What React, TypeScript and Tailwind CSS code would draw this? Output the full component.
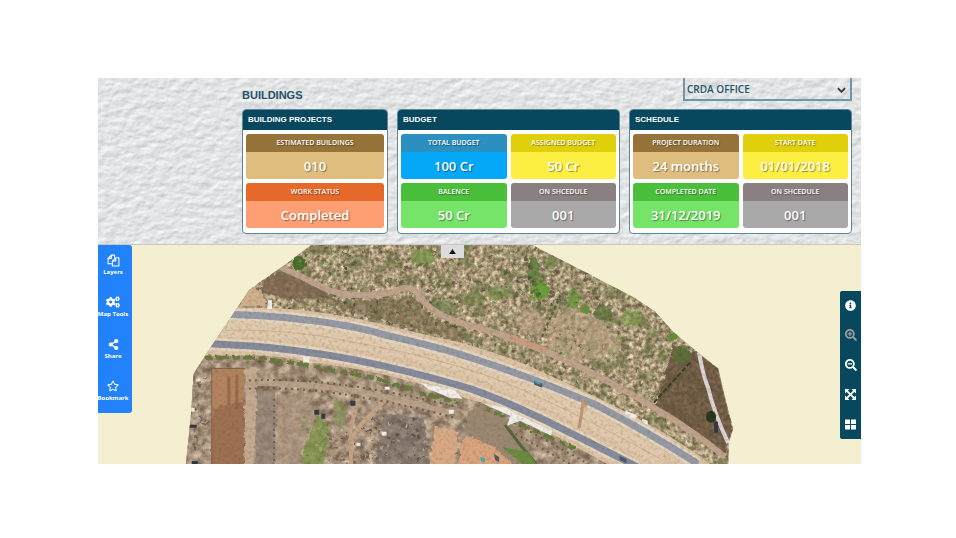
import type { ReactNode } from "react";
import { FaCogs, FaInfoCircle, FaRegStar, FaSearchMinus, FaSearchPlus, FaShareAlt } from "react-icons/fa";

type Tile = { label: string; value: string; head: string; body: string };

const projects: Tile[] = [
  { label: "ESTIMATED BUILDINGS", value: "010", head: "bg-[#967439]", body: "bg-[#dfbd7e]" },
  { label: "WORK STATUS", value: "Completed", head: "bg-[#e6692c]", body: "bg-[#fd9f72]" },
];

const budget: Tile[] = [
  { label: "TOTAL BUDGET", value: "100 Cr", head: "bg-[#2b8fbf]", body: "bg-[#05a7f8]" },
  { label: "ASSIGNED BUDGET", value: "50 Cr", head: "bg-[#e0d00b]", body: "bg-[#fdef42]" },
  { label: "BALENCE", value: "50 Cr", head: "bg-[#4abf3c]", body: "bg-[#75e468]" },
  { label: "ON SHCEDULE", value: "001", head: "bg-[#8b8081]", body: "bg-[#a9a9a9]" },
];

const schedule: Tile[] = [
  { label: "PROJECT DURATION", value: "24 months", head: "bg-[#967439]", body: "bg-[#dfbd7e]" },
  { label: "START DATE", value: "01/01/2018", head: "bg-[#e0d00b]", body: "bg-[#fdef42]" },
  { label: "COMPLETED DATE", value: "31/12/2019", head: "bg-[#4abf3c]", body: "bg-[#75e468]" },
  { label: "ON SHCEDULE", value: "001", head: "bg-[#8b8081]", body: "bg-[#a9a9a9]" },
];

function Card({ title, tiles, columns }: { title: string; tiles: Tile[]; columns: string }) {
  return (
    <section className="overflow-hidden rounded-[4px] border border-[#5d8799] bg-white">
      <h2 className="h-5 bg-[#07485f] pl-[5px] font-['Liberation_Sans',Arial,sans-serif] text-[8px] leading-[19px] font-bold text-white">
        {title}
      </h2>
      <div className={`grid gap-1 px-[3px] pt-1 pb-[5px] ${columns}`}>
        {tiles.map((tile) => (
          <div key={tile.label} className="overflow-hidden rounded-[3px] text-center text-white">
            <div className={`h-[18px] text-[7px] leading-[18px] font-semibold whitespace-nowrap text-shadow-[1px_1px_1px_rgb(0_0_0/0.4)] ${tile.head}`}>
              {tile.label}
            </div>
            <div className={`h-[27px] text-[13px] leading-[28px] font-semibold whitespace-nowrap text-shadow-[1px_1px_1px_rgb(0_0_0/0.4)] ${tile.body}`}>
              {tile.value}
            </div>
          </div>
        ))}
      </div>
    </section>
  );
}

function PaperTexture() {
  return (
    <svg className="absolute inset-0 h-full w-full" aria-hidden="true">
      <filter id="paper" x="0" y="0" width="100%" height="100%" colorInterpolationFilters="sRGB">
        <feTurbulence type="fractalNoise" baseFrequency="0.1 0.14" numOctaves="3" seed="8" result="n" />
        <feDiffuseLighting in="n" lightingColor="#fbfcfd" surfaceScale="0.5" diffuseConstant="1.1">
          <feDistantLight azimuth="60" elevation="55" />
        </feDiffuseLighting>
      </filter>
      <rect width="100%" height="100%" filter="url(#paper)" />
    </svg>
  );
}

/* Small seeded generator, so scattered shrubs land in the same place on each render. */
function random(seed: number) {
  let s = seed;
  return () => {
    s = (s * 16807) % 2147483647;
    return s / 2147483647;
  };
}

function scatter(seed: number, count: number, x: number, y: number, w: number, h: number, size: number, colors: string[]) {
  const r = random(seed);
  return Array.from({ length: count }, (_, i) => (
    <ellipse
      key={i}
      cx={x + r() * w}
      cy={y + r() * h}
      rx={0.6 + r() * size}
      ry={0.6 + r() * size}
      fill={colors[Math.floor(r() * colors.length)]}
      opacity={0.45 + r() * 0.45}
    />
  ));
}

const greens = ["#6f8a45", "#577238", "#7f9a58", "#4c5f38"];
const darks = ["#5e5140", "#4b4638", "#6d5a47", "#564b45"];

const roadEdge =
  "M200 303 L235 307 L280 308 Q330 311 387 325 T460 342 Q500 353 527 365 Q580 388 627 412 Q680 440 713 466 L612 466 Q560 437 520 417 Q490 403 467 398 Q430 385 380 373 Q340 365 313 362 Q280 355 257 355 L195 355 Z";
const dirtPath = "M276 265 Q300 275 323 287 Q340 296 365 295 Q387 295 400 289 Q412 284 420 296 Q433 316 470 325 Q527 340 593 373 Q640 398 653 407 Q690 428 724 456";
const upperLane = "M225 314 Q270 315 300 319 Q350 324 387 335 Q440 347 470 357 Q527 375 593 403 Q647 431 697 463";
const lowerLane = "M205 343 Q250 345 270 347 Q330 353 387 366 Q430 376 470 388 Q510 402 560 427 Q600 447 637 466";

function AerialMap() {
  return (
    <svg className="block h-full w-full" viewBox="98 245 763 218" preserveAspectRatio="xMidYMin slice" role="img" aria-label="Aerial survey map">
      <defs>
        <clipPath id="survey">
          <path d="M313 244 L287 264 L262 281 L250 290 L230 320 L213 345 L195 373 L192 417 L187 465 L727 465 L728 440 L732 428 L722 390 L717 368 L697 352 L673 332 L654 311 L633 297 L587 273 L530 244 Z" />
        </clipPath>
        <clipPath id="south">
          <path d="M187 350 L300 355 L400 372 L470 392 L545 430 L615 465 H187 Z" />
        </clipPath>
        <filter id="scrub" x="0" y="0" width="100%" height="100%" colorInterpolationFilters="sRGB">
          <feTurbulence type="fractalNoise" baseFrequency="0.24" numOctaves="3" seed="4" />
          <feColorMatrix values="0.85 0 0 0 0.26  0.85 0.05 0 0 0.17  0.75 0 0.05 0 0.1  0 0 0 0 1" />
        </filter>
        <filter id="thicket" x="0" y="0" width="100%" height="100%" colorInterpolationFilters="sRGB">
          <feTurbulence type="fractalNoise" baseFrequency="0.07" numOctaves="4" seed="29" />
          <feColorMatrix values="0 0 0 0 0.38  0 0 0 0 0.42  0 0 0 0 0.24  4 0 0 0 -1.95" />
        </filter>
        <filter id="soil" x="0" y="0" width="100%" height="100%" colorInterpolationFilters="sRGB">
          <feTurbulence type="fractalNoise" baseFrequency="0.12" numOctaves="4" seed="11" />
          <feColorMatrix values="0.6 0 0 0 0.35  0.6 0 0 0 0.27  0.55 0 0 0 0.21  0 0 0 0 1" />
        </filter>
        <filter id="grain" x="0" y="0" width="100%" height="100%" colorInterpolationFilters="sRGB">
          <feTurbulence type="fractalNoise" baseFrequency="0.3" numOctaves="2" seed="21" />
          <feColorMatrix values="0 0 0 0 0.4  0 0 0 0 0.3  0 0 0 0 0.22  1.2 0 0 0 -0.55" />
        </filter>
        <filter id="rough" x="-10%" y="-10%" width="120%" height="120%">
          <feTurbulence type="fractalNoise" baseFrequency="0.25" numOctaves="2" seed="3" result="n" />
          <feDisplacementMap in="SourceGraphic" in2="n" scale="5" xChannelSelector="R" yChannelSelector="G" />
        </filter>
      </defs>
      <rect x="98" y="245" width="763" height="218" fill="#f3efd0" />
      <g clipPath="url(#survey)">
        <rect x="187" y="244" width="546" height="221" filter="url(#scrub)" />
        <rect x="187" y="244" width="546" height="221" filter="url(#thicket)" opacity="0.6" />
        <g clipPath="url(#south)">
          <rect x="187" y="345" width="435" height="120" filter="url(#soil)" />
        </g>

        {/* vegetation and bare ground north of the road */}
        <g filter="url(#rough)">
          <path d="M264 280 L284 270 L320 287 L330 297 L290 299 L262 292 Z" fill="#79614d" opacity="0.8" />
          <path d="M252 286 L263 292 L268 306 L240 306 Z" fill="#d0b18e" />
          <path d="M310 297 Q370 304 412 296 L430 316 L470 335 L460 341 L400 324 L340 308 Z" fill="#786a4b" opacity="0.6" />
          <path d="M548 325 L570 305 L600 316 L620 350 L580 362 L545 345 Z" fill="#baa384" opacity="0.6" />
          <path d="M515 318 L530 306 L548 320 L540 340 L520 333 Z" fill="#bba185" opacity="0.5" />
          <path d="M673 345 L696 353 L720 369 L731 430 L723 455 L655 405 Z" fill="#604a37" opacity="0.75" />
          <ellipse cx="300" cy="263" rx="7" ry="7" fill="#466c29" />
          <ellipse cx="540" cy="290" rx="9" ry="9" fill="#689f3a" />
          <ellipse cx="533" cy="270" rx="6" ry="13" fill="#597e38" opacity="0.8" />
          <ellipse cx="550" cy="262" rx="8" ry="7" fill="#5f7a3a" opacity="0.6" />
          <ellipse cx="573" cy="299" rx="6" ry="10" fill="#65963c" opacity="0.8" />
          <ellipse cx="585" cy="309" rx="4" ry="4" fill="#65913a" />
          <ellipse cx="602" cy="312" rx="9" ry="8" fill="#576f37" opacity="0.7" />
          <ellipse cx="630" cy="318" rx="10" ry="9" fill="#7c9a4b" opacity="0.6" />
          <ellipse cx="681" cy="354" rx="9" ry="9" fill="#537034" opacity="0.8" />
          <ellipse cx="672" cy="336" rx="5" ry="4" fill="#638d37" />
          <ellipse cx="423" cy="257" rx="12" ry="8" fill="#789647" opacity="0.7" />
          <ellipse cx="497" cy="293" rx="11" ry="7" fill="#75924d" opacity="0.6" />
          <ellipse cx="474" cy="299" rx="10" ry="7" fill="#6c8045" opacity="0.6" />
          <ellipse cx="446" cy="306" rx="12" ry="7" fill="#738650" opacity="0.6" />
          {scatter(17, 110, 300, 246, 240, 62, 1.9, greens)}
          {scatter(91, 110, 290, 246, 250, 65, 1.2, darks)}
          {scatter(33, 75, 535, 268, 140, 90, 2, greens)}
          {scatter(58, 60, 520, 258, 80, 50, 1.8, darks)}
          {scatter(72, 80, 560, 350, 145, 70, 1.6, ["#6a7548", "#7e7250", "#665741"])}
          {scatter(49, 90, 330, 296, 130, 40, 1.5, darks)}
          {scatter(62, 60, 460, 325, 130, 60, 1.5, darks)}
        </g>
        <path d="M653 402 L690 361" stroke="#343d27" strokeWidth="2" strokeDasharray="5 2" />
        <path d="M560 295 L540 340" stroke="#5b5b3c" strokeWidth="2" strokeDasharray="3 3" />
        <path d={dirtPath} fill="none" stroke="#bfa38d" strokeWidth="6" />
        <path d="M510 336 L546 350" stroke="#ca9b7b" strokeWidth="5" />
        <path d="M698 352 Q702 375 707 387 Q713 412 727 442" fill="none" stroke="#dcd5d4" strokeWidth="4" />
        <ellipse cx="710" cy="416" rx="5" ry="6" fill="#26351c" />
        <path d="M715 421 V432" stroke="#343642" strokeWidth="4" />

        {/* highway: earthwork, shoulders and both carriageways */}
        <path d={roadEdge} fill="#dcc3a5" />
        <path d="M220 329 Q290 327 350 340 Q430 354 490 375 Q560 402 660 457" fill="none" stroke="#e0caae" strokeWidth="15" />
        <path d={upperLane} fill="none" stroke="#e4d5c0" strokeWidth="12" />
        <path d={lowerLane} fill="none" stroke="#e4d5c0" strokeWidth="12" />
        <path d={upperLane} fill="none" stroke="#959aa5" strokeWidth="7" />
        <path d={lowerLane} fill="none" stroke="#858b9b" strokeWidth="7" />
        <path d="M220 330 Q290 328 350 341 Q430 355 490 376 Q560 403 660 458" fill="none" stroke="#cfb293" strokeWidth="1" />
        <path d="M583 399 L579 427" stroke="#bd9674" strokeWidth="3" />
        <ellipse cx="584" cy="404" rx="3" ry="3" fill="#c59b7e" />

        {/* fields, tracks and construction yard south of the road */}
        <g filter="url(#rough)">
          <path d="M213 368 H245 V465 H212 Z" fill="#b3835f" />
          <path d="M214 408 L245 400 V465 H212 Z" fill="#94674c" opacity="0.7" />
          <path d="M247 368 H257 V465 H246 Z" fill="#c3aa90" />
          <path d="M258 390 H276 V465 H255 Z" fill="#918375" opacity="0.75" />
          <path d="M278 395 L310 392 L315 420 L296 465 H277 Z" fill="#ac9783" opacity="0.7" />
          <path d="M320 412 L329 430 L325 465 H301 L305 445 Z" fill="#82964e" opacity="0.8" />
          <path d="M334 398 L348 405 L345 430 L335 422 Z" fill="#819154" opacity="0.6" />
          <path d="M384 412 L424 418 L430 465 H375 Z" fill="#786d66" opacity="0.65" />
          <path d="M435 426 L458 430 L455 465 H430 Z" fill="#d8aa84" />
          <path d="M463 438 L480 433 L502 448 L522 457 V465 H458 Z" fill="#d9a37d" />
          <path d="M468 410 L484 405 L520 430 L538 465 H515 L495 447 L465 432 Z" fill="#9b8872" />
          {scatter(8, 60, 302, 415, 30, 48, 2, ["#75953c", "#627e3d", "#b2a87e"])}
          {scatter(77, 110, 372, 410, 56, 55, 1.3, ["#4c4948", "#96918e", "#c2bdb9", "#625148"])}
          {scatter(23, 60, 187, 375, 22, 90, 1.2, ["#6d6157", "#564c48", "#beb1a5"])}
          {scatter(14, 50, 330, 425, 50, 40, 1, darks)}
        </g>
        <path d="M230 376 V404 M238 374 V408" stroke="#8d6147" strokeWidth="3" opacity="0.7" />
        <path d="M213 368 H246 M213 368 V465" stroke="#7f6651" strokeWidth="1" fill="none" />
        <path d="M358 398 L351 430 L352 465 M386 399 L362 423 L350 440" fill="none" stroke="#c3a386" strokeWidth="4" />
        <path d="M248 383 Q340 380 450 412" fill="none" stroke="#b8a188" strokeWidth="5" />
        <g fill="none" stroke="#715d4b" strokeWidth="2" strokeDasharray="2 4">
          <path d="M250 380 Q330 375 456 406" />
          <path d="M250 388 Q330 384 455 417" />
          <path d="M275 398 V463" />
          <path d="M514 422 L588 463 M510 430 L575 466" />
        </g>
        <g fill="none" stroke="#667b3c" strokeWidth="4" strokeDasharray="7 3 12 5" filter="url(#rough)">
          <path d="M207 357 H256 L310 365 L378 378 L426 394 L460 402" />
          <path d="M485 407 L520 423 L575 448" />
        </g>
        <path d="M505 424 Q520 445 536 463" fill="none" stroke="#54673a" strokeWidth="3" />
        <path d="M502 446 L528 451 L536 463 H522 Z" fill="#6a8b3f" />
        <g fill="#f1eee9">
          <path d="M421 382 L430 384 L454 389 L463 398 L450 397 L428 388 Z" />
          <path d="M481 402 L505 407 L520 415 L552 430 L551 435 L520 420 L507 425 L510 415 Z" />
          <path d="M269 300 h4 v9 h-5 Z M304 356 h6 v6 h-6 Z M385 386 h5 v3 h-5 Z M449 409 h5 v4 h-5 Z M625 410 l10 4 v5 l-11 -5 Z M641 418 l6 2 v4 l-5 -2 Z" />
          <path d="M197 378 h4 v3 h-4 Z M192 407 h4 v4 h-4 Z M357 442 h4 v3 h-4 Z M382 431 h5 v4 h-5 Z" />
        </g>
        <path d="M190 424 h8 v3 h-8 Z M193 460 h6 v4 h-6 Z M351 400 h5 v5 h-5 Z M315 409 h5 v5 h-5 Z M322 413 h4 v5 h-4 Z" fill="#313944" />
        <path d="M534 380 l8 3 v4 l-8 -3 Z M494 453 l5 3 v5 l-4 -2 Z M619 455 l7 3 v4 l-7 -3 Z" fill="#4e5b6d" />
        <path d="M535 380 l5 2 v2 l-5 -2 Z M480 456 l5 1 v4 l-4 -1 Z" fill="#46a8b5" />
        <rect x="187" y="244" width="546" height="221" filter="url(#grain)" opacity="0.5" />
      </g>
    </svg>
  );
}

function LayersIcon() {
  return (
    <svg viewBox="0 0 24 24" className="size-[13px]" fill="none" stroke="currentColor" strokeWidth="2" strokeLinejoin="round" aria-hidden="true">
      <path d="M9 18H2V8l6-6h6v5M2 8h6V2" />
      <path d="M10 13l6-6h6v15H10zM10 13h6V7" />
    </svg>
  );
}

function ExpandIcon() {
  return (
    <svg viewBox="0 0 12 12" className="size-[11px]" fill="currentColor" aria-hidden="true">
      <path d="M0 0h5L0 5zM12 0v5L7 0zM0 12V7l5 5zM12 12H7l5-5z" />
      <path d="M2 2l8 8M10 2l-8 8" stroke="currentColor" strokeWidth="2" />
    </svg>
  );
}

function GridIcon() {
  return (
    <svg viewBox="0 0 22 22" className="size-[11px]" fill="currentColor" aria-hidden="true">
      <path d="M0 1h10v9H0zM12 1h10v9H12zM0 12h10v9H0zM12 12h10v9H12z" />
    </svg>
  );
}

const menu: { label: string; icon: ReactNode }[] = [
  { label: "Layers", icon: <LayersIcon /> },
  { label: "Map Tools", icon: <FaCogs className="size-[14px]" /> },
  { label: "Share", icon: <FaShareAlt className="size-[11px]" /> },
  { label: "Bookmark", icon: <FaRegStar className="size-[12px]" /> },
];

const tools: { label: string; icon: ReactNode; tone: string }[] = [
  { label: "Information", icon: <FaInfoCircle className="size-[11px]" />, tone: "text-white" },
  { label: "Zoom in", icon: <FaSearchPlus className="size-[12px]" />, tone: "text-[#9d9d9d]" },
  { label: "Zoom out", icon: <FaSearchMinus className="size-[12px]" />, tone: "text-white" },
  { label: "Full extent", icon: <ExpandIcon />, tone: "text-white" },
  { label: "Base maps", icon: <GridIcon />, tone: "text-white" },
];

export default function App() {
  return (
    <div className="min-h-screen bg-white pt-[78px] pr-[95px] pb-[74px] pl-[98px] font-['Open_Sans','Noto_Sans',sans-serif]">
      <main>
        <header className="relative overflow-hidden border-b border-[#c9c9c4] bg-[#e4e4e4] pr-[9px] pb-[10px] pl-36">
          <PaperTexture />
          <div className="relative">
            <div className="flex h-[31px] items-start justify-between">
              <h1 className="pt-[9px] font-['Liberation_Sans',Arial,sans-serif] text-[11px] leading-4 font-bold text-[#1f5268]">BUILDINGS</h1>
              <div className="relative w-[169px]">
                <select
                  aria-label="Building"
                  className="block h-[23px] w-full appearance-none border-2 border-t-0 border-[#6f97a8] bg-transparent pl-[2px] text-[10px] leading-5 font-semibold text-[#22566b]"
                >
                  <option>CRDA OFFICE</option>
                </select>
                <svg viewBox="0 0 10 6" className="pointer-events-none absolute top-[9px] right-[6px] h-[6px] w-[9px]" fill="none" stroke="#333333" strokeWidth="2" aria-hidden="true">
                  <path d="M1 1l4 4 4-4" />
                </svg>
              </div>
            </div>
            <div className="grid grid-cols-[146fr_223fr_223fr] gap-[9px]">
              <Card title="BUILDING PROJECTS" tiles={projects} columns="grid-cols-1" />
              <Card title="BUDGET" tiles={budget} columns="grid-cols-2" />
              <Card title="SCHEDULE" tiles={schedule} columns="grid-cols-2" />
            </div>
          </div>
        </header>
        <div className="relative h-[219px] overflow-hidden bg-[#f3efd0]">
          <AerialMap />
          <nav aria-label="Map menu" className="absolute top-0 left-0 flex w-[34px] flex-col rounded-r-[3px] bg-[#2282fb] pr-1 text-white">
            {menu.map((item) => (
              <button key={item.label} type="button" className="flex h-[42px] flex-col items-center justify-start pt-2">
                <span className="flex h-[14px] items-center">{item.icon}</span>
                <span className="text-[6px] leading-[10px] font-bold whitespace-nowrap">{item.label}</span>
              </button>
            ))}
          </nav>
          <button type="button" aria-label="Collapse summary" className="absolute top-0 left-[343px] flex h-[13px] w-[23px] items-center justify-center bg-[#dcdcdc]">
            <svg viewBox="0 0 8 6" className="h-[5px] w-[7px]" aria-hidden="true">
              <path d="M4 0l4 6H0z" fill="#111111" />
            </svg>
          </button>
          <div className="absolute top-[46px] right-0 flex h-[148px] w-[21px] flex-col rounded-l-[2px] bg-[#07485f]">
            {tools.map((tool) => (
              <button key={tool.label} type="button" aria-label={tool.label} className={`flex flex-1 items-center justify-center ${tool.tone}`}>
                {tool.icon}
              </button>
            ))}
          </div>
        </div>
      </main>
    </div>
  );
}
